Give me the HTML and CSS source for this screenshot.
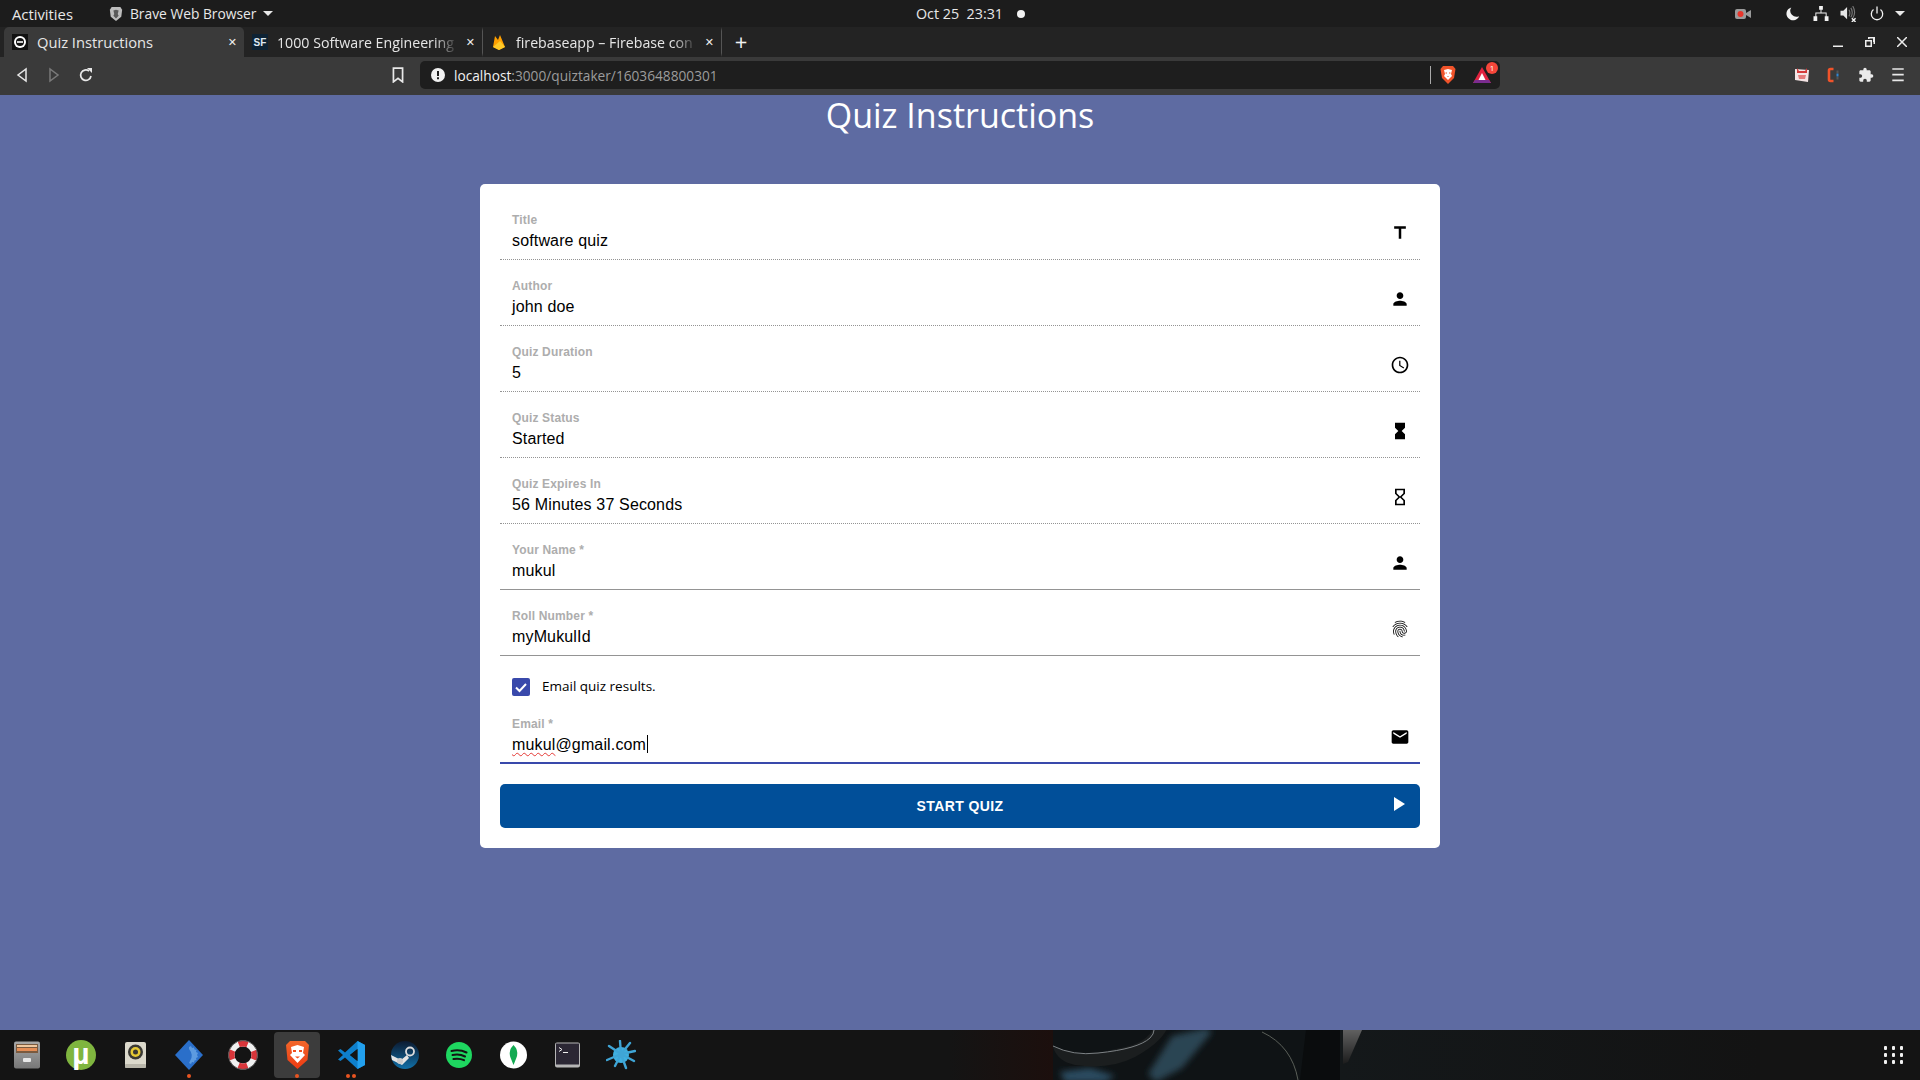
FILE: index.html
```html
<!DOCTYPE html>
<html lang="en">
<head>
  <meta charset="UTF-8">
  <meta name="viewport" content="width=device-width, initial-scale=1.0">
  <title>Quiz Instructions</title>
  <link rel="stylesheet" href="styles.css">
</head>
<body>
  <!-- Desktop top bar -->
  <div class="topbar">
    <div class="topbar-left">
      <span class="activities">Activities</span>
      <svg class="shield" viewBox="0 0 16 18"><path d="M3 1h10l2 3-1 8-6 5-6-5-1-8z" fill="#bdbdbd"/><path d="M5 5l3-1 3 1-1 4 1 2-3 3-3-3 1-2z" fill="#5a5a5a"/></svg>
      <span class="app-name">Brave Web Browser</span>
      <span class="caret"></span>
    </div>
    <div class="clock">Oct 25&nbsp; 23:31 <span class="clock-dot"></span></div>
    <div class="topbar-right">
      <svg class="tray-rec" viewBox="0 0 16 12"><rect y="1" width="11" height="10" rx="2" fill="#9a9a9a"/><path d="M11 5l5-3v8l-5-3z" fill="#9a9a9a"/><circle cx="5.500" cy="6" r="3" fill="#e8352b"/></svg>
      <svg class="tray-moon" viewBox="0 0 16 16"><path d="M6 1a7.500 7.500 0 1 0 9 10A7 7 0 0 1 6 1z" fill="#f2f2f2"/></svg>
      <svg class="tray-net" viewBox="0 0 16 16"><path d="M6 0h4v4H6zM0 11h4v5H0zM12 11h4v5h-4zM7.500 4h1v3H14v4h-1V8H3v3H2V7h5.500z" fill="#f2f2f2"/></svg>
      <svg class="tray-vol" viewBox="0 0 17 17"><path d="M0 5h3l4-4v13l-4-4H0z" fill="#e6e6e6"/><path d="M9 4q2 3.500 0 7M11 2q3 5 0 10M13 0q4 7 0 13" fill="none" stroke="#777" stroke-width="1.200"/><path d="M12 13l4 4M16 13l-4 4" stroke="#f2f2f2" stroke-width="1.500"/></svg>
      <svg class="tray-power" viewBox="0 0 16 16"><path d="M4 3.500a6.500 6.500 0 1 0 8 0" fill="none" stroke="#f2f2f2" stroke-width="1.500"/><path d="M8 0v8" stroke="#f2f2f2" stroke-width="1.500"/></svg>
      <span class="caret caret-tray"></span>
    </div>
  </div>

  <!-- Browser tabs -->
  <div class="tabbar">
    <div class="tab tab-active">
      <svg class="favicon" viewBox="0 0 16 16"><rect width="16" height="16" fill="#111"/><circle cx="8" cy="8" r="6" fill="#fff"/><circle cx="8" cy="8" r="4" fill="#111"/><rect x="5" y="7" width="6" height="2" fill="#ccc"/></svg>
      <span class="tab-title">Quiz Instructions</span>
      <span class="tab-close">✕</span>
    </div>
    <div class="tab">
      <svg class="favicon" viewBox="0 0 16 16"><rect width="16" height="16" fill="#0d2234"/><text x="8" y="12" text-anchor="middle" class="favicon-text">SF</text></svg>
      <span class="tab-title tab-title-fade">1000 Software Engineering</span>
      <span class="tab-close">✕</span>
    </div>
    <div class="tab">
      <svg class="favicon" viewBox="0 0 16 16"><path d="M2 13L4 2l3 4 2-5 5 12-6 3z" fill="#ffa000"/><path d="M2 13l7-6 5 6-6 3z" fill="#ffca28"/></svg>
      <span class="tab-title tab-title-fade">firebaseapp – Firebase con</span>
      <span class="tab-close">✕</span>
    </div>
    <span class="tab-new">+</span>
    <div class="window-controls">
      <svg viewBox="0 0 10 10"><path d="M0 8.500h10v1.500H0z" fill="#eee"/></svg>
      <svg viewBox="0 0 10 10"><path d="M3 0h7v7H8.500V5H8V1.500H4.500V2H3zM0 3h7v7H0zM1.500 4.500v4h4v-4z" fill="#eee"/></svg>
      <svg viewBox="0 0 10 10"><path d="M0 0l10 10M10 0L0 10" stroke="#eee" stroke-width="1.500"/></svg>
    </div>
  </div>

  <!-- Browser toolbar -->
  <div class="toolbar">
    <span class="tool-btn"><svg viewBox="0 0 10 16"><path d="M9 2v12L1 8z" fill="none" stroke="#e8e8e8" stroke-width="1.500"/></svg></span>
    <span class="tool-btn"><svg viewBox="0 0 10 16"><path d="M1 2v12l8-6z" fill="none" stroke="#7a7a7a" stroke-width="1.500"/></svg></span>
    <span class="tool-btn"><svg viewBox="0 0 14 16"><path d="M12 9a5.200 5.200 0 1 1-2-5" fill="none" stroke="#e8e8e8" stroke-width="1.700"/><path d="M8 1h5v5z" fill="#e8e8e8"/></svg></span>
    <span class="tool-btn bookmark-btn"><svg viewBox="0 0 10 14"><path d="M1 1h8v12L5 10l-4 3z" fill="none" stroke="#e8e8e8" stroke-width="1.500"/></svg></span>
    <div class="urlbar">
      <svg class="url-info" viewBox="0 0 14 14"><circle cx="7" cy="7" r="7" fill="#f2f2f2"/><path d="M6 3h2v5H6zM6 9.300h2v2H6z" fill="#1e1e1e"/></svg>
      <span class="url-host">localhost</span><span class="url-path">:3000/quiztaker/1603648800301</span>
      <span class="url-sep"></span>
      <svg class="url-brave" viewBox="0 0 16 18"><path d="M3 0h10l2.500 3-1.500 9-6 6-6-6L.5 3z" fill="#f0532a"/><path d="M4 4l4-1 4 1-1 4 1 2-4 4-4-4 1-2z" fill="#fff"/><path d="M5.500 6.500h1.500v1H5.500zM9 6.500h1.500v1H9zM7 10h2l-1 1z" fill="#f0532a"/></svg>
      <span class="url-bat">
        <svg viewBox="0 0 18 18"><path d="M9 1l9 16H0z" fill="#e0233f"/><path d="M0 17h18l-2-3H2z" fill="#7b2c8f"/><path d="M9 7l3.500 7h-7z" fill="#fff"/></svg>
        <span class="url-badge">1</span>
      </span>
    </div>
    <div class="extensions">
      <span class="tool-btn"><svg viewBox="0 0 16 16"><path d="M1 2l14 1-1 12-13-2z" fill="#f4e4e4"/><path d="M3 1l2 3h6l2-3v5H3z" fill="#d43a3a"/><path d="M4 8h8l-1 4H5z" fill="#e57b7b"/></svg></span>
      <span class="tool-btn"><svg viewBox="0 0 16 16"><path d="M7.500 2H4.500Q3 2 3 3.500v9Q3 14 4.500 14h3" fill="none" stroke="#f0532a" stroke-width="2.600"/><path d="M10.500 3.500h2v2.500h-2zM10.500 10h2v2.500h-2z" fill="#555"/><path d="M10.500 6.500h2v3h-2z" fill="#2f86d1"/></svg></span>
      <span class="tool-btn"><svg viewBox="0 0 24 24"><path d="M20.500 11H19V7c0-1.100-.9-2-2-2h-4V3.500a2.500 2.500 0 0 0-5 0V5H4c-1.100 0-2 .9-2 2v3.800h1.500c1.500 0 2.700 1.200 2.700 2.700S5 16.200 3.500 16.200H2V20c0 1.100.9 2 2 2h3.800v-1.500c0-1.500 1.200-2.700 2.700-2.700s2.700 1.200 2.700 2.700V22H17c1.100 0 2-.9 2-2v-4h1.500a2.500 2.500 0 0 0 0-5z" fill="#eaeaea"/></svg></span>
      <span class="tool-btn"><svg viewBox="0 0 12 14"><path d="M1 1h10v1.500H1zM1 6h10v1.500H1zM1 11h10v1.500H1z" fill="#e8e8e8"/></svg></span>
    </div>
  </div>

  <!-- Page content -->
  <main class="page">
    <h1 class="page-title">Quiz Instructions</h1>
    <div class="card">
      <div class="field field-disabled">
        <div class="field-text"><div class="field-label">Title</div><div class="field-value">software quiz</div></div>
        <svg class="field-icon" viewBox="0 0 24 24"><path d="M5 4v3h5.500v12h3V7H19V4z"/></svg>
      </div>
      <div class="field field-disabled">
        <div class="field-text"><div class="field-label">Author</div><div class="field-value">john doe</div></div>
        <svg class="field-icon" viewBox="0 0 24 24"><path d="M12 12c2.210 0 4-1.790 4-4s-1.790-4-4-4-4 1.790-4 4 1.790 4 4 4zm0 2c-2.670 0-8 1.340-8 4v2h16v-2c0-2.660-5.330-4-8-4z"/></svg>
      </div>
      <div class="field field-disabled">
        <div class="field-text"><div class="field-label">Quiz Duration</div><div class="field-value">5</div></div>
        <svg class="field-icon" viewBox="0 0 24 24"><path d="M11.990 2C6.470 2 2 6.480 2 12s4.470 10 9.990 10C17.520 22 22 17.520 22 12S17.520 2 11.990 2zM12 20c-4.420 0-8-3.580-8-8s3.580-8 8-8 8 3.580 8 8-3.580 8-8 8zm.5-13H11v6l5.250 3.150.75-1.230-4.500-2.670z"/></svg>
      </div>
      <div class="field field-disabled">
        <div class="field-text"><div class="field-label">Quiz Status</div><div class="field-value">Started</div></div>
        <svg class="field-icon" viewBox="0 0 24 24"><path d="M6 2v6h.01L6 8.010 10 12l-4 4 .01.01H6V22h12v-5.990h-.01L18 16l-4-4 4-3.990-.01-.01H18V2H6z"/></svg>
      </div>
      <div class="field field-disabled">
        <div class="field-text"><div class="field-label">Quiz Expires In</div><div class="field-value">56 Minutes 37 Seconds</div></div>
        <svg class="field-icon" viewBox="0 0 24 24"><path d="M6 2v6h.01L6 8.010 10 12l-4 4 .01.01H6V22h12v-5.990h-.01L18 16l-4-4 4-3.990-.01-.01H18V2H6zm10 14.500V20H8v-3.500l4-4 4 4zm-4-5l-4-4V4h8v3.500l-4 4z"/></svg>
      </div>
      <div class="field">
        <div class="field-text"><div class="field-label">Your Name *</div><div class="field-value">mukul</div></div>
        <svg class="field-icon" viewBox="0 0 24 24"><path d="M12 12c2.210 0 4-1.790 4-4s-1.790-4-4-4-4 1.790-4 4 1.790 4 4 4zm0 2c-2.670 0-8 1.340-8 4v2h16v-2c0-2.660-5.330-4-8-4z"/></svg>
      </div>
      <div class="field">
        <div class="field-text"><div class="field-label">Roll Number *</div><div class="field-value">myMukulId</div></div>
        <svg class="field-icon" viewBox="0 0 24 24"><path d="M17.810 4.470c-.08 0-.16-.02-.23-.06C15.660 3.420 14 3 12.010 3c-1.980 0-3.860.47-5.570 1.410-.24.130-.54.040-.68-.2-.13-.24-.04-.55.2-.68C7.820 2.520 9.860 2 12.010 2c2.130 0 3.990.47 6.030 1.520.25.130.34.430.21.670-.09.180-.26.280-.44.280zM3.500 9.720c-.1 0-.2-.03-.29-.09-.23-.16-.28-.47-.12-.7.990-1.400 2.250-2.500 3.750-3.270C9.980 4.040 14 4.030 17.150 5.650c1.500.770 2.760 1.860 3.750 3.250.16.220.11.540-.12.700-.23.160-.54.110-.7-.12-.9-1.260-2.040-2.250-3.390-2.940-2.870-1.470-6.540-1.470-9.400.010-1.360.7-2.500 1.700-3.400 2.960-.08.140-.23.210-.39.210zm6.250 12.070c-.13 0-.26-.05-.35-.15-.87-.87-1.340-1.430-2.010-2.640-.69-1.230-1.050-2.730-1.050-4.340 0-2.970 2.540-5.390 5.660-5.390s5.660 2.420 5.660 5.390c0 .28-.22.5-.5.5s-.5-.22-.5-.5c0-2.420-2.090-4.390-4.660-4.390s-4.660 1.970-4.660 4.390c0 1.440.32 2.770.93 3.850.64 1.150 1.080 1.640 1.850 2.420.19.2.19.510 0 .71-.11.1-.24.150-.37.150zm7.170-1.850c-1.190 0-2.240-.3-3.100-.89-1.490-1.010-2.380-2.650-2.380-4.390 0-.28.22-.5.5-.5s.5.220.5.5c0 1.410.72 2.740 1.940 3.560.71.480 1.540.71 2.540.71.24 0 .64-.03 1.040-.1.270-.05.530.130.580.410.05.270-.13.530-.41.580-.57.110-1.070.120-1.210.120zM14.910 22c-.04 0-.09-.01-.13-.02-1.590-.44-2.630-1.030-3.720-2.100-1.400-1.390-2.170-3.240-2.170-5.220 0-1.620 1.380-2.940 3.080-2.940s3.080 1.320 3.080 2.940c0 1.070.93 1.940 2.080 1.940s2.080-.87 2.080-1.940c0-3.770-3.250-6.830-7.250-6.830-2.840 0-5.440 1.580-6.610 4.030-.39.810-.59 1.760-.59 2.800 0 .780.070 2.010.67 3.610.1.260-.03.550-.29.640-.26.1-.55-.04-.64-.29-.49-1.310-.73-2.610-.73-3.960 0-1.200.23-2.290.68-3.240 1.330-2.790 4.280-4.600 7.510-4.600 4.550 0 8.250 3.510 8.250 7.830 0 1.620-1.380 2.940-3.080 2.940s-3.080-1.320-3.080-2.940c0-1.070-.93-1.940-2.080-1.940s-2.080.87-2.080 1.940c0 1.710.66 3.310 1.870 4.510.95.940 1.860 1.460 3.270 1.850.27.070.42.350.35.610-.05.230-.26.380-.47.380z"/></svg>
      </div>
      <div class="check-row">
        <span class="checkbox"><svg viewBox="0 0 18 18"><path d="M4 9.500l3.500 3.500L14 6" fill="none" stroke="#fff" stroke-width="2"/></svg></span>
        <span class="check-label">Email quiz results.</span>
      </div>
      <div class="field field-focused">
        <div class="field-text"><div class="field-label">Email *</div><div class="field-value"><span class="misspelled">mukul</span>@gmail.com<span class="text-caret"></span></div></div>
        <svg class="field-icon" viewBox="0 0 24 24"><path d="M20 4H4c-1.100 0-1.990.9-1.990 2L2 18c0 1.100.9 2 2 2h16c1.100 0 2-.9 2-2V6c0-1.100-.9-2-2-2zm0 4l-8 5-8-5V6l8 5 8-5v2z"/></svg>
      </div>
      <button class="start-btn">
        <span class="start-label">START QUIZ</span>
        <svg viewBox="0 0 24 24"><path d="M8 5v14l11-7z" fill="#fff"/></svg>
      </button>
    </div>
  </main>

  <!-- Ubuntu dock -->
  <footer class="dock">
    <svg class="wallpaper" viewBox="0 0 1920 50">
      <defs>
        <linearGradient id="wall-red" x1="0" x2="1" y1="0" y2="0"><stop offset="0" stop-color="#141414"/><stop offset="1" stop-color="#1c0f0d"/></linearGradient>
        <linearGradient id="wall-dark" x1="0" x2="1" y1="0" y2="0"><stop offset="0" stop-color="#14181a"/><stop offset="1" stop-color="#131313"/></linearGradient>
        <linearGradient id="wall-wedge" x1="0" x2="0" y1="0" y2="1"><stop offset="0" stop-color="#606060"/><stop offset="1" stop-color="#1c1c1c"/></linearGradient>
        <filter id="wall-blur"><feGaussianBlur stdDeviation="3"/></filter>
      </defs>
      <rect x="950" width="103" height="50" fill="url(#wall-red)"/>
      <rect x="1053" width="290" height="50" fill="#0f1315"/>
      <rect x="1340" width="420" height="50" fill="url(#wall-dark)"/>
      <path d="M1060 42l30-4 25 8-10 6h-40z" fill="#2c4c60" filter="url(#wall-blur)"/>
      <path d="M1172 6l34-8 6 4-30 36-26 14-8-8z" fill="#294452" filter="url(#wall-blur)"/>
      <path d="M1053 17q4 14 22 18 35 5 60-8 25-14 32-28h-14q-8 16-38 20-28 8-45 3-10-4-17-5z" fill="#1b1e1f"/>
      <path d="M1053 16q20 10 45 7 40-4 52-15 4-4 4-8" fill="none" stroke="#7d8285" stroke-width="1"/>
      <path d="M1262 2q30 14 36 48" fill="none" stroke="#5a5f58" stroke-width="1"/>
      <path d="M1306 0h34v50h-40z" fill="#0a0c0d"/>
      <path d="M1343 0h19l-14 32-5 2z" fill="url(#wall-wedge)"/>
    </svg>
    <span class="dock-item">
      <svg viewBox="0 0 26 30"><defs><linearGradient id="cab-bg" x1="0" x2="0" y1="0" y2="1"><stop offset="0" stop-color="#a8a8a8"/><stop offset="1" stop-color="#777"/></linearGradient></defs><rect y="1.500" width="26" height="27" rx="2" fill="url(#cab-bg)"/><rect x="2" y="4" width="22" height="9" fill="#7a5a3f"/><rect x="3" y="5" width="20" height="2" fill="#f0c8a0"/><rect x="3" y="8" width="20" height="3" fill="#e58d55"/><rect x="9" y="18" width="8" height="4" rx="1" fill="#e8e8e8"/></svg>
    </span>
    <span class="dock-item">
      <svg viewBox="0 0 30 30"><circle cx="15" cy="15" r="15" fill="#7fb53f"/><text x="15" y="24" text-anchor="middle" class="dock-mu">µ</text></svg>
    </span>
    <span class="dock-item">
      <svg viewBox="0 0 21 30"><rect y="2" width="21" height="26" rx="2" fill="#dcd9cc"/><rect y="24" width="21" height="4" rx="1" fill="#b9b6aa"/><circle cx="10.500" cy="12" r="7.500" fill="#3a3934"/><circle cx="10.500" cy="12" r="5" fill="#e6c934"/><circle cx="10.500" cy="12" r="2.500" fill="#3a3934"/></svg>
    </span>
    <span class="dock-item">
      <svg viewBox="0 0 28 30"><path d="M14 0l14 15-14 15L0 15z" fill="#2a6fca"/><path d="M14 7l2-1 1 2 2-.5.5 2 2 .5-.5 2 2 1-1 2 1 2-2 1 .5 2-2 .5-.5 2-2-.5-1 2-2-1 1-2q4-6-1-12z" fill="#5d9be0"/></svg>
      <span class="dock-dots"><i></i></span>
    </span>
    <span class="dock-item">
      <svg viewBox="0 0 30 30"><circle cx="15" cy="15" r="11.500" fill="none" stroke="#f0f0f0" stroke-width="6"/><circle cx="15" cy="15" r="11.500" fill="none" stroke="#d9353a" stroke-width="6" stroke-dasharray="9 9" stroke-dashoffset="4.500"/><circle cx="15" cy="15" r="14.500" fill="none" stroke="#555" stroke-width="1"/></svg>
    </span>
    <span class="dock-item dock-item-active">
      <svg viewBox="0 0 27 30"><defs><linearGradient id="brave-bg" x1="0" x2="0" y1="0" y2="1"><stop offset="0" stop-color="#f1662a"/><stop offset="1" stop-color="#ee3a12"/></linearGradient></defs><path d="M6 1h15l4 4-1.500 15L13.500 29 3.500 20 2 5z" fill="url(#brave-bg)"/><path d="M7 7l6.500-2L20 7l-1 6 2 2-7.500 8L6 15l2-2z" fill="#fff"/><path d="M9 10h3v2H9zM15 10h3v2h-3zM11 16.500h5l-2.500 2z" fill="#f1501f"/></svg>
      <span class="dock-dots"><i></i></span>
    </span>
    <span class="dock-item">
      <svg viewBox="0 0 27 30"><path d="M19.500 1L27 5v20l-7.500 4L7 17.500 2.500 21 0 19.500 5 15 0 10.500 2.500 9 7 12.500zm0 8L12 15l7.500 6z" fill="#0e7fcb"/><path d="M19.500 1L27 5v20l-7.500 4z" fill="#22a0ee"/><path d="M19.500 9L12 15l7.500 6z" fill="#141414"/></svg>
      <span class="dock-dots"><i></i><i></i></span>
    </span>
    <span class="dock-item">
      <svg viewBox="0 0 28 30"><defs><linearGradient id="steam-bg" x1="0" x2="0" y1="0" y2="1"><stop offset="0" stop-color="#0c1a30"/><stop offset="1" stop-color="#1170a8"/></linearGradient></defs><circle cx="14" cy="15" r="14" fill="url(#steam-bg)"/><circle cx="19" cy="11.500" r="4" fill="none" stroke="#ddd" stroke-width="1.800"/><path d="M0 15l10 5 6-5 2 3-7 7-10-5z" fill="#e4e4e4"/><circle cx="9" cy="21" r="3" fill="#ccc"/></svg>
    </span>
    <span class="dock-item">
      <svg viewBox="0 0 26 30"><circle cx="13" cy="15" r="13" fill="#1ed760"/><path d="M5.500 11q8-2 15 1.500M6.500 15q7-1.500 12.500 1.500M7.500 19q6-1 10.500 1.200" fill="none" stroke="#141414" stroke-width="2" stroke-linecap="round"/></svg>
    </span>
    <span class="dock-item">
      <svg viewBox="0 0 27 30"><circle cx="13.500" cy="15" r="13.500" fill="#fff"/><path d="M13.500 5q5 5 3.500 11-1 3-3.500 9-2.500-6-3.500-9-1.500-6 3.500-11z" fill="#13aa52"/></svg>
    </span>
    <span class="dock-item">
      <svg viewBox="0 0 25 30"><rect y="2.500" width="25" height="25" rx="2" fill="#b5b5b5"/><rect x="1" y="3.500" width="23" height="21" fill="#2b2734"/><path d="M4 7.500l3 2-3 2" fill="none" stroke="#eee" stroke-width="1"/><path d="M8 12h5v1H8z" fill="#eee"/></svg>
    </span>
    <span class="dock-item">
      <svg viewBox="0 0 30 30"><circle cx="15" cy="15" r="8" fill="#3fb0e0"/><path d="M15 14L14 1M15 14L24 3M15 14L29 11M15 14L28 21M15 14L20 28M15 14L9 26M15 14L1 20M15 14L3 6" stroke="#3fa5d6" stroke-width="2.400" stroke-linecap="round"/></svg>
    </span>
    <svg class="apps-grid" viewBox="0 0 19 18"><g fill="#f2f2f2"><rect width="3" height="4" rx="1"/><rect x="8" width="3" height="4" rx="1"/><rect x="16" width="3" height="4" rx="1"/><rect y="7" width="3" height="4" rx="1"/><rect x="8" y="7" width="3" height="4" rx="1"/><rect x="16" y="7" width="3" height="4" rx="1"/><rect y="14" width="3" height="4" rx="1"/><rect x="8" y="14" width="3" height="4" rx="1"/><rect x="16" y="14" width="3" height="4" rx="1"/></g></svg>
  </footer>
</body>
</html>
```

FILE: styles.css
```css
* {
  box-sizing: border-box;
}
body {
  margin: 0;
  height: 1080px;
  overflow: hidden;
  display: flex;
  flex-direction: column;
  font-family: "Open Sans", "Noto Sans", sans-serif;
  background-color: #5e6ba2;
}
svg {
  display: block;
  flex-shrink: 0;
}

/* Desktop top bar */
.topbar {
  height: 27px;
  display: grid;
  grid-template-columns: 1fr auto 1fr;
  align-items: center;
  padding: 0 15px 0 12px;
  background: #1c1c1c;
  color: #e8e8e8;
  font-size: 14.3px;
}
.topbar-left, .topbar-right {
  display: flex;
  align-items: center;
}
.topbar-right {
  justify-content: flex-end;
}
.activities {
  margin-right: 36px;
  font-size: 14.8px;
}
.app-name {
  font-size: 13.8px;
}
.shield {
  width: 14px;
  height: 16px;
  margin-right: 7px;
}
.caret {
  width: 0;
  height: 0;
  margin-left: 7px;
  border-left: 5px solid transparent;
  border-right: 5px solid transparent;
  border-top: 5px solid #e8e8e8;
}
.caret-tray {
  margin-left: 11px;
}
.clock {
  display: flex;
  align-items: center;
  padding-left: 24px;
}
.clock-dot {
  width: 8px;
  height: 8px;
  margin-left: 14px;
  border-radius: 50%;
  background: #f2f2f2;
}
.tray-rec {
  width: 16px;
  height: 12px;
  margin-right: 35px;
}
.tray-moon {
  width: 14px;
  height: 15px;
  margin-right: 13px;
}
.tray-net {
  width: 16px;
  height: 15px;
  margin-right: 11px;
}
.tray-vol {
  width: 17px;
  height: 16px;
  margin-right: 13px;
}
.tray-power {
  width: 14px;
  height: 15px;
}

/* Browser tabs */
.tabbar {
  height: 30px;
  display: flex;
  align-items: stretch;
  padding-left: 4px;
  background: #232323;
  color: #e6e6e6;
  font-size: 14.2px;
}
.tab {
  width: 239px;
  display: flex;
  align-items: center;
  gap: 9px;
  padding: 0 7px 0 8px;
  border-right: 1px solid #555;
  border-top: 4px solid transparent;
  border-bottom: 4px solid transparent;
  background-clip: padding-box;
}
.tab-active {
  width: 240px;
  border: 0;
  border-radius: 5px 5px 0 0;
  background: #3a3a3a;
  font-size: 14.7px;
}
.favicon {
  width: 16px;
  height: 16px;
}
.favicon-text {
  fill: #dfe9f2;
  font-family: "Liberation Sans", sans-serif;
  font-size: 10px;
  font-weight: bold;
}
.tab-title {
  flex: 1;
  margin-right: -7px;
  overflow: hidden;
  white-space: nowrap;
}
.tab-title-fade {
  -webkit-mask-image: linear-gradient(to right, #000 84%, transparent 97%);
  mask-image: linear-gradient(to right, #000 84%, transparent 97%);
}
.tab-close {
  font-size: 11px;
  font-family: "DejaVu Sans", sans-serif;
  color: #eee;
}
.tab-new {
  width: 38px;
  text-align: center;
  font-size: 22px;
  line-height: 28px;
  color: #f2f2f2;
}
.window-controls {
  margin-left: auto;
  display: flex;
  align-items: center;
  gap: 22px;
  padding-right: 13px;
}
.window-controls svg {
  width: 10px;
  height: 10px;
}

/* Browser toolbar */
.toolbar {
  height: 38px;
  display: flex;
  align-items: center;
  padding: 0 6px 2px;
  background: #3a3a3a;
}
.tool-btn {
  width: 32px;
  height: 28px;
  display: flex;
  align-items: center;
  justify-content: center;
}
.tool-btn svg {
  width: 16px;
  height: 16px;
}
.bookmark-btn {
  margin-left: 280px;
}
.urlbar {
  width: 1080px;
  height: 28px;
  margin-left: 6px;
  padding: 0 9px 0 11px;
  display: flex;
  align-items: center;
  border-radius: 5px;
  background: #1e1e1e;
  font-size: 13.7px;
}
.url-info {
  width: 14px;
  height: 14px;
  margin-right: 9px;
}
.url-host {
  color: #f2f2f2;
}
.url-path {
  color: #9c9c9c;
}
.url-sep {
  width: 1px;
  height: 18px;
  margin-left: auto;
  margin-right: 9px;
  background: #aaa;
}
.url-brave {
  width: 16px;
  height: 18px;
  margin-right: 17px;
}
.url-bat {
  position: relative;
  width: 18px;
  height: 18px;
}
.url-bat svg {
  width: 18px;
  height: 18px;
}
.url-badge {
  position: absolute;
  top: -4px;
  right: -7px;
  width: 12px;
  height: 12px;
  border-radius: 50%;
  background: #f5463a;
  color: #fff;
  font-size: 8px;
  line-height: 12px;
  text-align: center;
}
.extensions {
  margin-left: auto;
  display: flex;
}

/* Page content */
.page {
  flex: 1;
  background: #5e6ba2;
}
.page-title {
  margin: 0 0 49px;
  font-size: 34px;
  font-weight: 400;
  line-height: 40px;
  text-align: center;
  color: #fff;
}
.card {
  width: 960px;
  margin: 0 auto;
  padding: 10px 20px 20px;
  border-radius: 5px;
  background: #fff;
}
.field {
  height: 66px;
  display: flex;
  justify-content: space-between;
  align-items: flex-start;
  padding: 18px 10px 0 12px;
  border-bottom: 1px solid #949494;
  font-family: "Liberation Sans", Arial, sans-serif;
  letter-spacing: 0.00938em;
}
.field-disabled {
  border-bottom: 1px dotted #949494;
}
.field-focused {
  height: 56px;
  padding-top: 8px;
  border-bottom: 2px solid #3949ab;
}
.field-label {
  height: 16px;
  font-size: 12px;
  font-weight: bold;
  line-height: 16px;
  color: #adadad;
}
.field-value {
  margin-top: 3px;
  font-size: 16px;
  line-height: 20px;
  color: #000;
}
.field-icon {
  width: 20px;
  height: 20px;
  margin-top: 11px;
}
.misspelled {
  text-decoration: underline wavy #e53935 1px;
  text-underline-offset: 2px;
}
.text-caret {
  display: inline-block;
  width: 1px;
  height: 18px;
  margin-left: 1px;
  vertical-align: -3px;
  background: #000;
}
.check-row {
  height: 52px;
  display: flex;
  align-items: center;
  padding: 10px 0 0 12px;
}
.checkbox {
  width: 18px;
  height: 18px;
  margin-right: 12px;
  border-radius: 2px;
  background: #3949ab;
}
.check-label {
  margin-bottom: 2px;
  font-size: 13.5px;
  color: #000;
}
.start-btn {
  width: 100%;
  height: 44px;
  margin-top: 20px;
  padding: 0 10px;
  display: grid;
  grid-template-columns: 1fr auto 1fr;
  align-items: center;
  border: none;
  border-radius: 5px;
  background: #014f99;
  color: #fff;
  font-family: "Liberation Sans", Arial, sans-serif;
  font-size: 14px;
  font-weight: bold;
  letter-spacing: 0.02857em;
  cursor: pointer;
}
.start-label {
  grid-column: 2;
}
.start-btn svg {
  grid-column: 3;
  justify-self: end;
  width: 24px;
  height: 24px;
  margin-bottom: 4px;
}

/* Ubuntu dock */
.dock {
  position: relative;
  height: 50px;
  display: flex;
  align-items: center;
  background: #141414;
}
.wallpaper {
  position: absolute;
  top: 0;
  left: 0;
  width: 1920px;
  height: 50px;
}
.dock-item {
  position: relative;
  width: 54px;
  height: 50px;
  display: flex;
  align-items: center;
  justify-content: center;
}
.dock-item svg {
  height: 30px;
  width: auto;
}
.dock-item-active::before {
  content: "";
  position: absolute;
  top: 2px;
  left: 4px;
  width: 46px;
  height: 46px;
  border-radius: 4px;
  background: #3c3c3c;
}
.dock-item-active svg {
  position: relative;
}
.dock-mu {
  fill: #fff;
  font-family: "Liberation Sans", sans-serif;
  font-size: 30px;
  font-weight: bold;
}
.dock-dots {
  position: absolute;
  bottom: 2px;
  left: 0;
  width: 100%;
  display: flex;
  justify-content: center;
  gap: 2px;
}
.dock-dots i {
  width: 4px;
  height: 4px;
  border-radius: 50%;
  background: #e95420;
}
.apps-grid {
  position: absolute;
  left: 1884px;
  top: 16px;
  width: 19px;
  height: 18px;
}
```
